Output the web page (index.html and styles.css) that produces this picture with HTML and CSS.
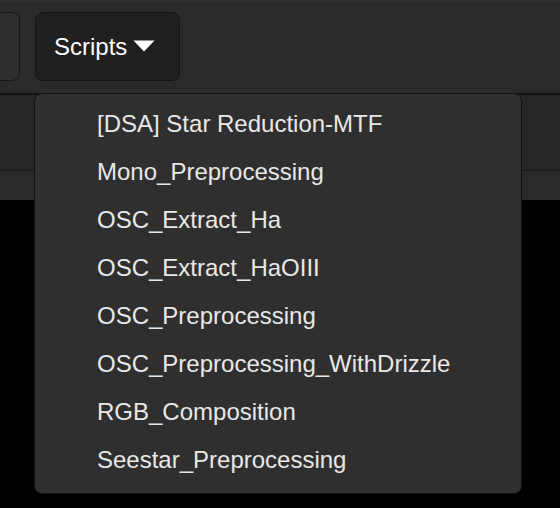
FILE: index.html
```html
<!DOCTYPE html>
<html>
<head>
<meta charset="utf-8">
<link rel="stylesheet" href="styles.css">
</head>
<body>
<div class="app">
  <div class="toolbar">
    <div class="btn btn-prev"></div>
    <div class="btn btn-scripts">
      <span class="label">Scripts</span>
      <svg class="caret" width="22" height="12" viewBox="0 0 22 12"><polygon points="0.5,0.5 21.5,0.5 11,11.5" fill="#ffffff"/></svg>
    </div>
  </div>
  <div class="subbar"></div>
  <div class="strip"></div>
  <div class="canvas"></div>

  <ul class="menu">
    <li class="item">[DSA] Star Reduction-MTF</li>
    <li class="item">Mono_Preprocessing</li>
    <li class="item">OSC_Extract_Ha</li>
    <li class="item">OSC_Extract_HaOIII</li>
    <li class="item">OSC_Preprocessing</li>
    <li class="item">OSC_Preprocessing_WithDrizzle</li>
    <li class="item">RGB_Composition</li>
    <li class="item">Seestar_Preprocessing</li>
  </ul>
</div>
</body>
</html>
```
FILE: styles.css
```css
html, body {
  margin: 0;
  padding: 0;
  background: #000;
  font-family: "Liberation Sans", Arial, sans-serif;
}

.app {
  position: relative;
  width: 560px;
  height: 508px;
  overflow: hidden;
  background: #000;
}

.toolbar {
  height: 91px;
  border-top: 2px solid #303030;
  border-bottom: 2px solid #121212;
  background: #2a2a2a;
  display: flex;
  align-items: flex-start;
  padding-top: 10px;
  box-sizing: border-box;
  height: 95px;
  gap: 15px;
}

.btn {
  height: 69px;
  box-sizing: border-box;
  border-radius: 8px;
}

.btn-prev {
  width: 40px;
  margin-left: -20px;
  background: #2d2d2d;
  border: 1px solid #161616;
}

.btn-scripts {
  width: 145px;
  background: #202020;
  border: 1px solid #141414;
  display: flex;
  align-items: center;
  padding-left: 18px;
  gap: 6px;
  color: #fff;
  font-size: 24px;
}

.label {
  line-height: 1;
  padding-top: 0px;
}

.caret {
  display: block;
  margin-top: -1px;
}

.subbar {
  height: 75px;
  background: #262626;
  border-bottom: 1px solid #1a1a1a;
}

.strip {
  height: 29px;
  background: #2a2a2a;
}

.canvas {
  height: 308px;
  background: #000;
}

.menu {
  position: absolute;
  left: 34px;
  top: 93px;
  width: 488px;
  height: 401px;
  box-sizing: border-box;
  margin: 0;
  padding: 6px 0 0 0;
  list-style: none;
  background: #2f2f2f;
  border: 1px solid #121212;
  border-radius: 8px;
}

.item {
  height: 48px;
  line-height: 48px;
  padding-left: 62px;
  font-size: 24px;
  color: #e8e8e8;
  white-space: nowrap;
}
```
